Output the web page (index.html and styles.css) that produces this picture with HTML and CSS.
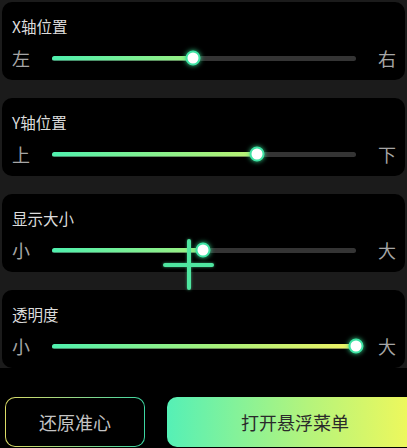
FILE: index.html
```html
<!DOCTYPE html>
<html lang="zh">
<head>
<meta charset="utf-8">
<link rel="stylesheet" href="styles.css">
</head>
<body>
<div class="app">
  <div class="list">
    <section class="card">
      <div class="title">X轴位置</div>
      <div class="row">
        <span class="lbl">左</span>
        <div class="track" style="--v:46.4%"><div class="fill"></div><div class="thumb"></div></div>
        <span class="lbl">右</span>
      </div>
    </section>
    <section class="card">
      <div class="title">Y轴位置</div>
      <div class="row">
        <span class="lbl">上</span>
        <div class="track" style="--v:67.3%"><div class="fill"></div><div class="thumb"></div></div>
        <span class="lbl">下</span>
      </div>
    </section>
    <section class="card">
      <div class="title">显示大小</div>
      <div class="row">
        <span class="lbl">小</span>
        <div class="track" style="--v:49.7%"><div class="fill"></div><div class="thumb"></div></div>
        <span class="lbl">大</span>
      </div>
    </section>
    <section class="card">
      <div class="title">透明度</div>
      <div class="row">
        <span class="lbl">小</span>
        <div class="track" style="--v:100%"><div class="fill"></div><div class="thumb"></div></div>
        <span class="lbl">大</span>
      </div>
    </section>
  </div>
  <div class="actions">
    <button class="btn btn-outline">还原准心</button>
    <button class="btn btn-fill">打开悬浮菜单</button>
  </div>
  <svg class="crosshair" width="51" height="51" viewBox="0 0 51 51">
    <line x1="26" y1="2" x2="26" y2="49"/>
    <line x1="2" y1="26" x2="49" y2="26"/>
  </svg>
</div>
</body>
</html>
```

FILE: styles.css
```css
html, body {
  margin: 0;
  padding: 0;
  background: #000;
}
body {
  width: 407px;
  height: 448px;
  overflow: hidden;
  font-family: "Noto Sans CJK SC", "Noto Sans", sans-serif;
}
.app {
  position: relative;
  width: 407px;
  height: 448px;
}
.list {
  background: #1b1b1b;
  padding: 2px 2px 0 2px;
  display: flex;
  flex-direction: column;
  gap: 18px;
}
.card {
  background: #000;
  border-radius: 10px;
  height: 78px;
  box-sizing: border-box;
  padding: 13px 9px 0 10px;
}
.title {
  font-size: 15.5px;
  line-height: 22px;
  color: #dcdcdc;
}
.row {
  display: flex;
  align-items: center;
  height: 24px;
  margin-top: 9px;
}
.lbl {
  flex: 0 0 18px;
  font-size: 18px;
  line-height: 24px;
  color: #a6a6a6;
}
.track {
  position: relative;
  flex: 1;
  height: 5px;
  margin: 0 22px;
  border-radius: 3px;
  background: #343434;
}
.fill {
  height: 100%;
  border-radius: 3px;
  background: linear-gradient(90deg, #4ff0ae 0%, #a8f07a 55%, #f2f264 100%);
  clip-path: inset(0 calc(100% - var(--v)) 0 0);
}
.thumb {
  position: absolute;
  top: 50%;
  left: var(--v);
  width: 11px;
  height: 11px;
  border-radius: 50%;
  background: #fff;
  border: 2px solid #3fe3a4;
  box-shadow: 0 0 5px #36d890;
  transform: translate(-50%, -50%);
}
.actions {
  display: flex;
  gap: 22px;
  padding: 29px 0 0 5px;
}
.btn {
  flex-shrink: 0;
  height: 50px;
  border-radius: 10px;
  font-family: "Noto Sans CJK SC", "Noto Sans", sans-serif;
  font-size: 18px;
  padding: 0;
  cursor: pointer;
}
.btn-outline {
  width: 140px;
  color: #c4c4c4;
  border: 1.5px solid transparent;
  background:
    linear-gradient(#000, #000) padding-box,
    linear-gradient(90deg, #dcdc66 0%, #96d888 50%, #3cd6a2 100%) border-box;
}
.btn-fill {
  width: 256px;
  color: #2a2a2a;
  border: none;
  background: linear-gradient(90deg, #55f0b6 0%, #b4f47c 55%, #f6f858 100%);
}
.crosshair {
  position: absolute;
  left: 163px;
  top: 239px;
  stroke: #4fe6a0;
  stroke-width: 4;
  stroke-linecap: round;
  filter: drop-shadow(0 0 1.5px rgba(79, 230, 160, 0.6));
}
```
